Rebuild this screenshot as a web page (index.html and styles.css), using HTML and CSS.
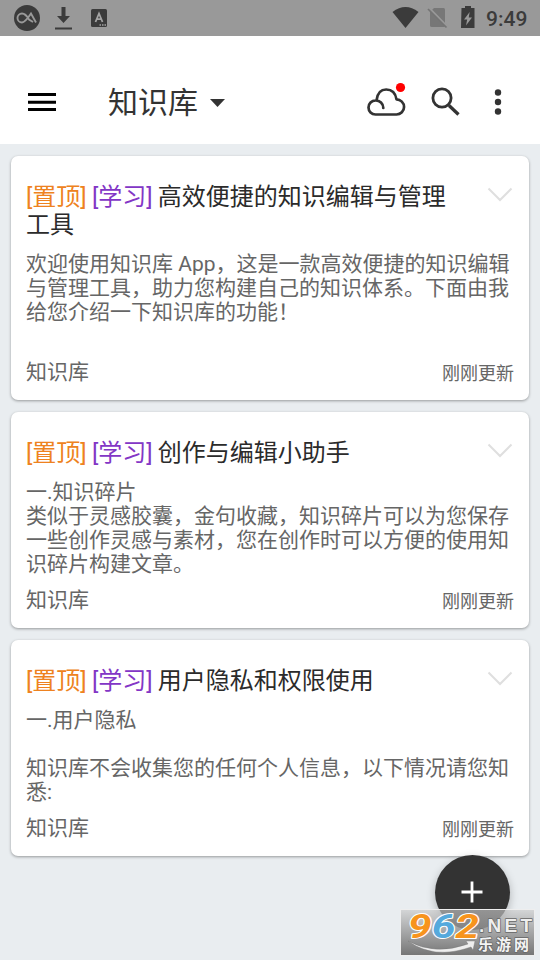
FILE: index.html
```html
<!DOCTYPE html>
<html lang="zh-CN">
<head>
<meta charset="utf-8">
<title>知识库</title>
<link rel="stylesheet" href="styles.css">
</head>
<body>
<div class="status">
  <svg class="status-left" width="120" height="36" viewBox="0 0 120 36">
    <circle cx="27" cy="18" r="13" fill="#3b3b3b"/>
    <path d="M36 22.500L31 13.500Q25 22.500 22 22.500A4.500 4.500 0 1 1 22 13.500C25 13.500 27 16 29 19.500L33 22" fill="none" stroke="#999" stroke-width="1.900"/>
    <path d="M61.500 7h4v9h4.500l-6.500 7-6.500-7h4.500zM55 27.500h17v2H55z" fill="#3b3b3b"/>
    <rect x="91" y="9" width="16" height="18" rx="1.500" fill="#3b3b3b"/>
    <path d="M95.500 22l3.500-8.500 3.500 8.500M96.700 19.200h4.600" fill="none" stroke="#a4a4a4" stroke-width="1.800"/>
    <path d="M99.500 25h1.500M102 25h1.500M104.500 25h1.500" stroke="#a4a4a4" stroke-width="1.300"/>
  </svg>
  <svg class="status-right" width="90" height="36" viewBox="390 0 90 36">
    <path d="M392.500 12Q405.500 2 418.500 12L405.500 28z" fill="#3b3b3b"/>
    <path d="M434 8h9.500q1.500 0 1.500 1.500v16.500q0 1-1.500 1H432q-2 0-2-1.500V12z" fill="#777"/>
    <path d="M429.500 8.500L447.500 27" stroke="#999" stroke-width="2.500"/>
    <path d="M428 9L446.500 27.500" stroke="#747474" stroke-width="1.700"/>
    <path d="M461.500 8h3.500V6h6v2h3.500v20h-13.500z" fill="#3b3b3b"/>
    <path d="M469.700 12L464 19.500h3.200l-1.200 6 6-8h-3.300z" fill="#999"/>
  </svg>
  <span class="clock">9:49</span>
</div>
<header class="bar">
  <svg class="menu" width="28" height="20" viewBox="0 0 28 20"><path d="M0 2.500h28M0 10.200h28M0 17.600h28" stroke="#000" stroke-width="3"/></svg>
  <h1>知识库</h1>
  <svg class="caret" width="15" height="8" viewBox="0 0 15 8"><path d="M0 0h15L7.500 8z" fill="#333"/></svg>
  <svg class="actions" width="140" height="40" viewBox="365 80 140 40">
    <path d="M383.300 108A7.500 7.500 0 0 0 375.500 100.500A7 7 0 0 0 375.500 114.500H396.500A7.300 7.300 0 0 0 396.500 99.400Q395 89.500 386.200 89.500Q378 89.500 376.600 100" fill="none" stroke="#333" stroke-width="2.700" stroke-linejoin="round" stroke-linecap="round"/>
    <circle cx="400.500" cy="87.500" r="4.600" fill="red"/>
    <circle cx="442" cy="98" r="9.100" fill="none" stroke="#333" stroke-width="2.800"/>
    <path d="M449 105.500L458.500 114.500" stroke="#333" stroke-width="3.300"/>
    <g fill="#333"><circle cx="498" cy="92.500" r="3.200"/><circle cx="498" cy="102" r="3.200"/><circle cx="498" cy="111.500" r="3.200"/></g>
  </svg>
</header>
<main class="list">
  <article class="card">
    <svg class="chevron" width="26" height="16" viewBox="0 0 26 16"><path d="M1.500 1.500L13 13L24.500 1.500"/></svg>
    <h2><span class="pin">[置顶]</span> <span class="tag">[学习]</span> 高效便捷的知识编辑与管理工具</h2>
    <p>欢迎使用知识库 App，这是一款高效便捷的知识编辑<br>与管理工具，助力您构建自己的知识体系。下面由我<br>给您介绍一下知识库的功能！</p>
    <footer><span>知识库</span><time>刚刚更新</time></footer>
  </article>
  <article class="card">
    <svg class="chevron" width="26" height="16" viewBox="0 0 26 16"><path d="M1.500 1.500L13 13L24.500 1.500"/></svg>
    <h2><span class="pin">[置顶]</span> <span class="tag">[学习]</span> 创作与编辑小助手</h2>
    <p>一.知识碎片<br>类似于灵感胶囊，金句收藏，知识碎片可以为您保存<br>一些创作灵感与素材，您在创作时可以方便的使用知<br>识碎片构建文章。</p>
    <footer><span>知识库</span><time>刚刚更新</time></footer>
  </article>
  <article class="card">
    <svg class="chevron" width="26" height="16" viewBox="0 0 26 16"><path d="M1.500 1.500L13 13L24.500 1.500"/></svg>
    <h2><span class="pin">[置顶]</span> <span class="tag">[学习]</span> 用户隐私和权限使用</h2>
    <p>一.用户隐私<br><br>知识库不会收集您的任何个人信息，以下情况请您知<br>悉:</p>
    <footer><span>知识库</span><time>刚刚更新</time></footer>
  </article>
</main>
<div class="fab"><svg width="22" height="22" viewBox="0 0 22 22"><path d="M11 0.500v21M0.500 11h21" stroke="#fff" stroke-width="2.800"/></svg></div>
<div class="watermark">
  <svg width="133" height="45" viewBox="401 910 133 45">
    <g class="mark">
      <text class="digits" x="408" y="938" textLength="71" lengthAdjust="spacingAndGlyphs"><tspan fill="#f7941d">9</tspan><tspan fill="#55a9dc">6</tspan><tspan fill="#f7941d">2</tspan></text>
      <text class="net" x="479" y="932" textLength="53">.NET</text>
      <text class="cn" x="478" y="949.500" textLength="51">乐游网</text>
    </g>
    <path d="M408 941Q435 956 468 944L466 941L475 941L473 950L471 947Q434 960 408 941z" fill="#eee" stroke="#777" stroke-width=".4"/>
  </svg>
</div>
</body>
</html>
```

FILE: styles.css
```css
* { box-sizing: border-box; }
body {
  margin: 0;
  width: 540px;
  height: 960px;
  overflow: hidden;
  position: relative;
  background: #e9edf0;
  font-family: Roboto, "Noto Sans CJK SC", sans-serif;
}
svg { display: block; flex: none; }
.status { height: 36px; background: #999; display: flex; align-items: center; }
.status-right { margin-left: 270px; }
.clock { margin-left: 6px; font-size: 21px; line-height: 36px; font-weight: 500; color: #3b3b3b; padding-top: 1px; }
.bar { height: 108px; background: #fff; padding: 24px 35px 0 28px; display: flex; align-items: center; }
h1 { margin: 2px 0 0 52px; font-size: 30px; line-height: 36px; font-weight: 400; color: #333; }
.caret { margin: 1px 0 0 12px; }
.actions { margin: -4px 0 0 auto; }
.list { padding: 12px 11px; display: flex; flex-direction: column; gap: 12px; }
.card {
  position: relative;
  background: #fff;
  border-radius: 7px;
  padding: 27px 15px 16px;
  box-shadow: 0 1px 3px rgba(0, 0, 0, .36);
}
.chevron { position: absolute; right: 16px; top: 31px; fill: none; stroke: #dfdfdf; stroke-width: 2; }
h2 { margin: 0 56px 13px 0; font-size: 24px; line-height: 28px; font-weight: 400; color: #2b2b2b; word-spacing: -.8px; }
.pin { color: #ee8220; }
.tag { color: #8336c6; }
p { margin: 0 -8px 12px 0; height: 96px; font-size: 21px; line-height: 24px; color: #666; white-space: nowrap; }
footer { display: flex; justify-content: space-between; font-size: 21px; line-height: 24px; color: #666; }
time { font-size: 18px; line-height: 28px; height: 24px; }
.fab {
  position: absolute;
  left: 435px;
  top: 855px;
  width: 75px;
  height: 75px;
  border-radius: 50%;
  background: #333;
  display: flex;
  align-items: center;
  justify-content: center;
  padding: 0 1px 1px 0;
  box-shadow: 0 3px 8px rgba(0, 0, 0, .25);
}
.watermark {
  position: absolute;
  left: 400px;
  top: 909px;
  border: 1px solid #eee;
  background: linear-gradient(rgba(200, 200, 200, .65), rgba(112, 112, 112, .95));
}
.mark text { paint-order: stroke; stroke-linejoin: round; }
.digits { font: italic 700 33px Roboto, sans-serif; stroke: #fff; stroke-width: 2px; }
.net { font: 700 19px "Liberation Sans", sans-serif; fill: #eee; stroke: #666; stroke-width: 1.5px; }
.cn { font: 700 15px "Noto Sans CJK SC", sans-serif; fill: #f4f4f4; stroke: #666; stroke-width: 1.5px; }
```
